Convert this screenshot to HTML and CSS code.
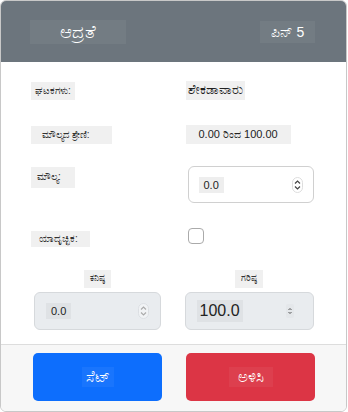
FILE: index.html
```html
<!doctype html>
<html lang="kn">
<head>
    <meta charset="UTF-8">
    <title>ಆದ್ರತೆ</title>
    <link rel="stylesheet" href="styles.css">
</head>
<body>
<div class="card">
    <div class="head">
        <span class="tag title">ಆದ್ರತೆ</span>
        <span class="tag pin">ಪಿನ್ 5</span>
    </div>
    <div class="body">
        <div class="row r1">
            <div><span class="tag lbl">ಘಟಕಗಳು:</span></div>
            <div><span class="tag val">ಶೇಕಡಾವಾರು</span></div>
        </div>
        <div class="row r2">
            <div><span class="tag lbl">ಮೌಲ್ಯದ ಶ್ರೇಣಿ:</span></div>
            <div><span class="tag val range">0.00 ರಿಂದ 100.00</span></div>
        </div>
        <div class="row r3">
            <div><span class="tag lbl">ಮೌಲ್ಯ:</span></div>
            <div class="num">
                <span class="tag n">0.0</span>
                <span class="spin">
                    <svg width="11" height="16" viewBox="0 0 11 16"><rect x="0.5" y="0.5" width="10" height="15" rx="5" fill="#fff" stroke="#ddd"/><path d="M3 6.5l2.5-2.5 2.5 2.5M3 9.5l2.5 2.5 2.5-2.5" fill="none" stroke="#444" stroke-width="1.2"/></svg>
                </span>
            </div>
        </div>
        <div class="row r4">
            <div><span class="tag lbl">ಯಾದೃಚ್ಛಿಕ:</span></div>
            <div><span class="check"></span></div>
        </div>
        <div class="row r5">
            <div class="col">
                <span class="tag cap">ಕನಿಷ್ಠ</span>
                <div class="num off">
                    <span class="tag n">0.0</span>
                    <span class="spin">
                        <svg width="11" height="16" viewBox="0 0 11 16"><rect x="0.5" y="0.5" width="10" height="15" rx="5" fill="#f1f3f5" stroke="#dcdfe3"/><path d="M3 6.5l2.5-2.5 2.5 2.5M3 9.5l2.5 2.5 2.5-2.5" fill="none" stroke="#aaa" stroke-width="1.1"/></svg>
                    </span>
                </div>
            </div>
            <div class="col">
                <span class="tag cap">ಗರಿಷ್ಠ</span>
                <div class="num off">
                    <span class="tag n big">100.0</span>
                    <span class="spin small">
                        <svg width="8" height="14" viewBox="0 0 8 14"><rect width="8" height="14" rx="2" fill="#e4e7ea"/><path d="M2.5 6l1.5-1.5 1.5 1.5M2.5 8l1.5 1.5 1.5-1.5" fill="none" stroke="#444" stroke-width="0.9"/></svg>
                    </span>
                </div>
            </div>
        </div>
    </div>
    <div class="foot">
        <button class="btn set"><span class="tag">ಸೆಟ್</span></button>
        <button class="btn del"><span class="tag">ಅಳಿಸಿ</span></button>
    </div>
</div>
</body>
</html>
```

FILE: styles.css
```css
* {
    margin: 0;
    padding: 0;
    box-sizing: border-box;
}

body {
    font-family: "Liberation Sans", "Noto Sans", sans-serif;
    background: #fff;
}

.card {
    width: 347px;
    height: 412px;
    border: 1px solid #c8c8c8;
    border-radius: 6px;
    overflow: hidden;
}

.tag {
    display: inline-block;
    background: rgba(0, 0, 0, .06);
}

.head {
    height: 61px;
    background: #6c757d;
    display: flex;
    justify-content: space-between;
    align-items: center;
    padding: 0 31px 0 29px;
    color: #fff;
}

.head .tag {
    background: rgba(255, 255, 255, .05);
}

.title {
    width: 96px;
    height: 24px;
    line-height: 24px;
    text-align: center;
    font-size: 18px;
}

.pin {
    width: 55px;
    height: 22px;
    line-height: 22px;
    text-align: center;
    font-size: 14px;
}

.body {
    padding: 18px 32px 0 30px;
    height: 283px;
    border-bottom: 1px solid #ddd;
}

.row {
    display: grid;
    grid-template-columns: 1fr 1fr;
    column-gap: 24px;
    align-items: start;
}

.lbl {
    font-size: 10px;
    color: #333;
    padding: 3px 4px;
}

.val {
    font-size: 13px;
    color: #222;
    padding: 1px 2px 2px;
    margin-left: 1px;
}

.range {
    font-size: 11px;
    padding: 3px 13px;
}

.r1 { height: 20px; margin-bottom: 24px; }
.r2 { height: 20px; margin-bottom: 22px; }
.r3 { height: 37px; margin-bottom: 25px; }
.r4 { height: 16px; margin-bottom: 26px; }

.r2 .lbl { padding: 3px 22px 3px 11px; }
.r3 .lbl { padding: 4px 14px 5px 6px; }
.r4 .lbl { padding: 2px 12px 2px 8px; }

.num {
    height: 37px;
    margin-left: 3px;
    border: 1px solid #d0d0d0;
    border-radius: 6px;
    display: flex;
    align-items: center;
    justify-content: space-between;
    padding: 0 10px;
}

.n {
    font-size: 11px;
    color: #222;
    padding: 2px 5px;
    background: #eee;
}

.spin {
    display: flex;
}

.check {
    display: block;
    width: 16px;
    height: 16px;
    margin-left: 3px;
    border: 1px solid #aaa;
    border-radius: 4px;
}

.col {
    display: flex;
    flex-direction: column;
    align-items: center;
}

.r5 .col:first-child {
    margin-left: 3px;
}

.cap {
    font-size: 9px;
    height: 18px;
    padding: 3px 6px;
    color: #333;
    margin-bottom: 4px;
}

.num.off {
    width: 100%;
    height: 38px;
    margin-left: 0;
    background: #e9ecef;
    border-color: #d6d9dc;
    padding: 0 11px;
}

.off .n {
    background: #dfe2e5;
}

.n.big {
    font-size: 16px;
    padding: 2px 3px;
}

.small {
    margin-right: 8px;
}

.foot {
    background: #f7f7f7;
    display: flex;
    gap: 24px;
    padding: 8px 31px 0 32px;
    height: 67px;
}

.btn {
    flex: 1;
    height: 48px;
    border: 0;
    border-radius: 5px;
    color: #fff;
    font-family: inherit;
    font-size: 15px;
}

.btn .tag {
    background: rgba(255, 255, 255, .05);
    padding: 1px 4px;
}

.set {
    background: #0d6efd;
}

.del {
    background: #dc3545;
}

.del .tag {
    padding: 1px 9px;
}
```
